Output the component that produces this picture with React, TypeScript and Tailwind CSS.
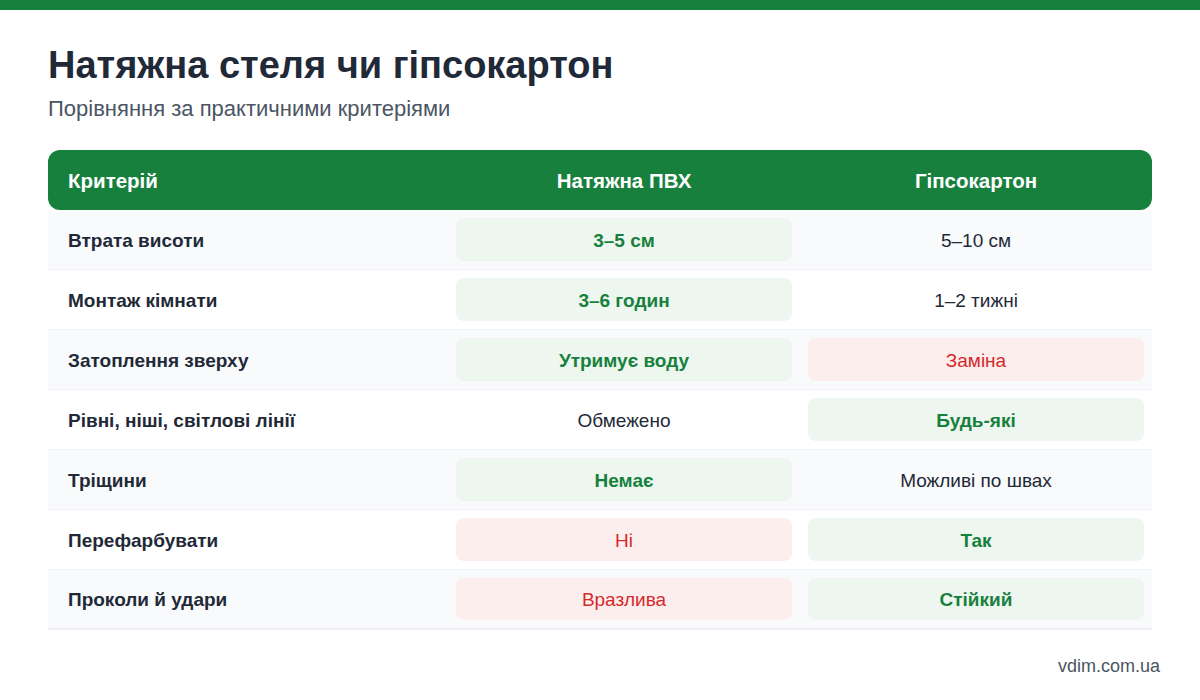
const rows: { label: string; a: [string, "good" | "bad" | "plain"]; b: [string, "good" | "bad" | "plain"] }[] = [
  { label: "Втрата висоти", a: ["3–5 см", "good"], b: ["5–10 см", "plain"] },
  { label: "Монтаж кімнати", a: ["3–6 годин", "good"], b: ["1–2 тижні", "plain"] },
  { label: "Затоплення зверху", a: ["Утримує воду", "good"], b: ["Заміна", "bad"] },
  { label: "Рівні, ніші, світлові лінії", a: ["Обмежено", "plain"], b: ["Будь-які", "good"] },
  { label: "Тріщини", a: ["Немає", "good"], b: ["Можливі по швах", "plain"] },
  { label: "Перефарбувати", a: ["Ні", "bad"], b: ["Так", "good"] },
  { label: "Проколи й удари", a: ["Вразлива", "bad"], b: ["Стійкий", "good"] },
];

const Cell = ({ text, kind }: { text: string; kind: "good" | "bad" | "plain" }) => {
  const tone =
    kind === "good"
      ? "bg-[#eef6f0] text-[#17803d] font-bold"
      : kind === "bad"
      ? "bg-[#fdeeee] text-[#d42a2a]"
      : "text-[#1f2937]";
  return (
    <div className="p-2 h-full">
      <div className={`h-full pt-[3px] rounded-lg flex items-center justify-center text-[19px] ${tone}`}>{text}</div>
    </div>
  );
};

export default function App() {
  return (
    <div className="w-[1200px] h-[700px] bg-white flex flex-col font-['Liberation_Sans',Arial,sans-serif] overflow-hidden">
      <div className="h-[10px] bg-[#17803d] shrink-0" />
      <div className="px-12 pt-[33px] flex-1 flex flex-col">
        <h1 className="text-[38px] leading-[44px] font-bold text-[#1f2937]">Натяжна стеля чи гіпсокартон</h1>
        <p className="mt-[9px] text-[22px] leading-[26px] text-[#4b5563]">Порівняння за практичними критеріями</p>

        <div className="mt-[28px] flex flex-col">
          <div className="grid grid-cols-[400px_352px_352px] h-[60px] pt-[2px] bg-[#17803d] rounded-xl text-white text-[20.5px] font-bold items-center">
            <div className="pl-5">Критерій</div>
            <div className="text-center">Натяжна ПВХ</div>
            <div className="text-center">Гіпсокартон</div>
          </div>
          {rows.map((r, i) => (
            <div
              key={r.label}
              className={`grid grid-cols-[400px_352px_352px] h-[60px] border-b border-[#eef0f3] ${
                i % 2 === 0 ? "bg-[#f8fafc]" : "bg-white"
              } ${i === rows.length - 1 ? "border-b-2" : ""}`}
            >
              <div className="pl-5 pt-[3px] flex items-center text-[19px] font-bold text-[#1f2937]">{r.label}</div>
              <Cell text={r.a[0]} kind={r.a[1]} />
              <Cell text={r.b[0]} kind={r.b[1]} />
            </div>
          ))}
        </div>

        <div className="mt-auto mb-[20px] text-right mr-[-8px] text-[18px] text-[#4b5563]">vdim.com.ua</div>
      </div>
    </div>
  );
}
